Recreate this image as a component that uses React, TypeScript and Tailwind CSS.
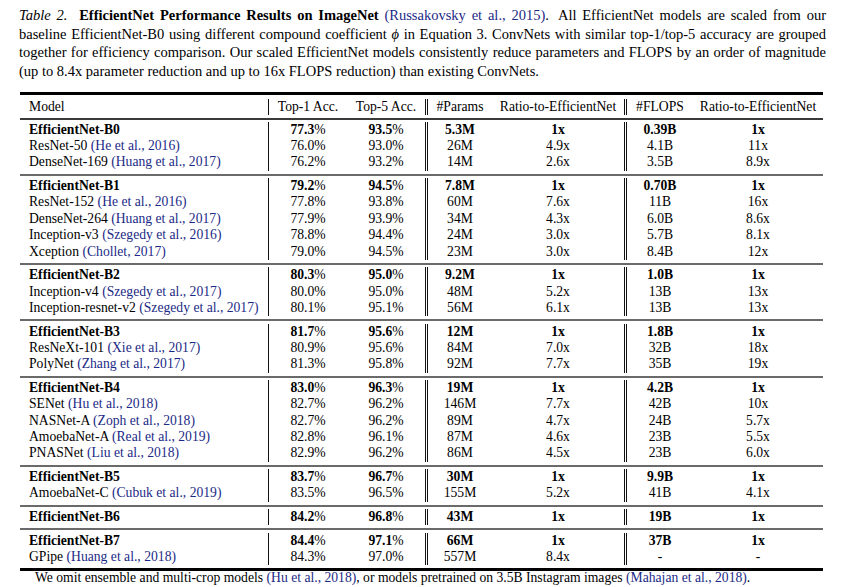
type Row = [string, string | null, string, string, string, string, string, string]

const groups: Row[][] = [
  [
    ["EfficientNet-B0", null, "77.3", "93.5", "5.3M", "1x", "0.39B", "1x"],
    ["ResNet-50", "He et al., 2016", "76.0", "93.0", "26M", "4.9x", "4.1B", "11x"],
    ["DenseNet-169", "Huang et al., 2017", "76.2", "93.2", "14M", "2.6x", "3.5B", "8.9x"],
  ],
  [
    ["EfficientNet-B1", null, "79.2", "94.5", "7.8M", "1x", "0.70B", "1x"],
    ["ResNet-152", "He et al., 2016", "77.8", "93.8", "60M", "7.6x", "11B", "16x"],
    ["DenseNet-264", "Huang et al., 2017", "77.9", "93.9", "34M", "4.3x", "6.0B", "8.6x"],
    ["Inception-v3", "Szegedy et al., 2016", "78.8", "94.4", "24M", "3.0x", "5.7B", "8.1x"],
    ["Xception", "Chollet, 2017", "79.0", "94.5", "23M", "3.0x", "8.4B", "12x"],
  ],
  [
    ["EfficientNet-B2", null, "80.3", "95.0", "9.2M", "1x", "1.0B", "1x"],
    ["Inception-v4", "Szegedy et al., 2017", "80.0", "95.0", "48M", "5.2x", "13B", "13x"],
    ["Inception-resnet-v2", "Szegedy et al., 2017", "80.1", "95.1", "56M", "6.1x", "13B", "13x"],
  ],
  [
    ["EfficientNet-B3", null, "81.7", "95.6", "12M", "1x", "1.8B", "1x"],
    ["ResNeXt-101", "Xie et al., 2017", "80.9", "95.6", "84M", "7.0x", "32B", "18x"],
    ["PolyNet", "Zhang et al., 2017", "81.3", "95.8", "92M", "7.7x", "35B", "19x"],
  ],
  [
    ["EfficientNet-B4", null, "83.0", "96.3", "19M", "1x", "4.2B", "1x"],
    ["SENet", "Hu et al., 2018", "82.7", "96.2", "146M", "7.7x", "42B", "10x"],
    ["NASNet-A", "Zoph et al., 2018", "82.7", "96.2", "89M", "4.7x", "24B", "5.7x"],
    ["AmoebaNet-A", "Real et al., 2019", "82.8", "96.1", "87M", "4.6x", "23B", "5.5x"],
    ["PNASNet", "Liu et al., 2018", "82.9", "96.2", "86M", "4.5x", "23B", "6.0x"],
  ],
  [
    ["EfficientNet-B5", null, "83.7", "96.7", "30M", "1x", "9.9B", "1x"],
    ["AmoebaNet-C", "Cubuk et al., 2019", "83.5", "96.5", "155M", "5.2x", "41B", "4.1x"],
  ],
  [["EfficientNet-B6", null, "84.2", "96.8", "43M", "1x", "19B", "1x"]],
  [
    ["EfficientNet-B7", null, "84.4", "97.1", "66M", "1x", "37B", "1x"],
    ["GPipe", "Huang et al., 2018", "84.3", "97.0", "557M", "8.4x", "-", "-"],
  ],
]

const cols = "grid grid-cols-[249px_78px_81px_64px_135px_66px_130px]"
const single = "border-r border-[#111]"
const double = "border-r-[3px] border-double border-[#111]"

function Cite({ children }: { children: React.ReactNode }) {
  return <span className="text-[#1b2a86]">({children})</span>
}

function Pct({ v, bold }: { v: string; bold: boolean }) {
  return (
    <>
      <span className={bold ? "font-bold" : ""}>{v}</span>
      <span>%</span>
    </>
  )
}

function DataRow({ row }: { row: Row }) {
  const [name, cite, t1, t5, params, r1, flops, r2] = row
  const bold = cite === null
  const b = bold ? "font-bold" : ""
  return (
    <div className={`${cols} h-[16.4px] leading-[16.4px]`}>
      <div className={`${single} pl-[9px] whitespace-nowrap`}>
        <span className={b}>{name}</span>
        {cite && (
          <>
            {" "}
            <Cite>{cite}</Cite>
          </>
        )}
      </div>
      <div className="text-center">
        <Pct v={t1} bold={bold} />
      </div>
      <div className={`${double} text-center`}>
        <Pct v={t5} bold={bold} />
      </div>
      <div className={`text-center ${b}`}>{params}</div>
      <div className={`${double} text-center ${b}`}>{r1}</div>
      <div className={`text-center ${b}`}>{flops}</div>
      <div className={`text-center ${b}`}>{r2}</div>
    </div>
  )
}

function Separator() {
  return (
    <div className="pt-[3px] pb-[2.2px]">
      <div className="h-[2px] bg-[#6a6a6a]" />
    </div>
  )
}

export default function App() {
  return (
    <div className="min-h-[587px] w-[853px] bg-white pl-[19px] pt-[6px] text-black [font-family:'Liberation_Serif','Times_New_Roman',serif]">
      <p className="w-[807px] text-justify text-[14.5px] leading-[18.7px]">
        <i className="mr-[6px]">Table 2.</i> <b>EfficientNet Performance Results on ImageNet</b>{" "}
        <span className="text-[#1b2a86]">(Russakovsky et al., 2015)</span>.<span className="ml-[4px]" />{" "}
        All EfficientNet models are scaled from our baseline EfficientNet-B0 using different compound
        coefficient <i>ϕ</i> in Equation 3. ConvNets with similar top-1/top-5 accuracy are grouped together
        for efficiency comparison. Our scaled EfficientNet models consistently reduce parameters and FLOPS by
        an order of magnitude (up to 8.4x parameter reduction and up to 16x FLOPS reduction) than existing
        ConvNets.
      </p>

      <div className="ml-[1px] mt-[11px] w-[803px] text-[13.65px]">
        <div className="h-[3px] bg-black" />
        <div className={`${cols} mt-[4px] h-[16.4px] leading-[16.4px]`}>
          <div className={`${single} pl-[9px]`}>Model</div>
          <div className="text-center">Top-1 Acc.</div>
          <div className={`${double} text-center`}>Top-5 Acc.</div>
          <div className="text-center">#Params</div>
          <div className={`${double} text-center`}>Ratio-to-EfficientNet</div>
          <div className="text-center">#FLOPS</div>
          <div className="text-center">Ratio-to-EfficientNet</div>
        </div>
        <div className="pt-[2.5px] pb-[2px]">
          <div className="h-[2px] bg-[#3a3a3a]" />
        </div>

        {groups.map((g, i) => (
          <div key={i}>
            {i > 0 && <Separator />}
            {g.map((row) => (
              <DataRow key={row[0]} row={row} />
            ))}
          </div>
        ))}

        <div className="mt-[3px] h-[3px] bg-black" />
        <p className="pl-[15px] leading-[14px] whitespace-nowrap">
          We omit ensemble and multi-crop models <Cite>Hu et al., 2018</Cite>, or models pretrained on 3.5B
          Instagram images <Cite>Mahajan et al., 2018</Cite>.
        </p>
      </div>
    </div>
  )
}
